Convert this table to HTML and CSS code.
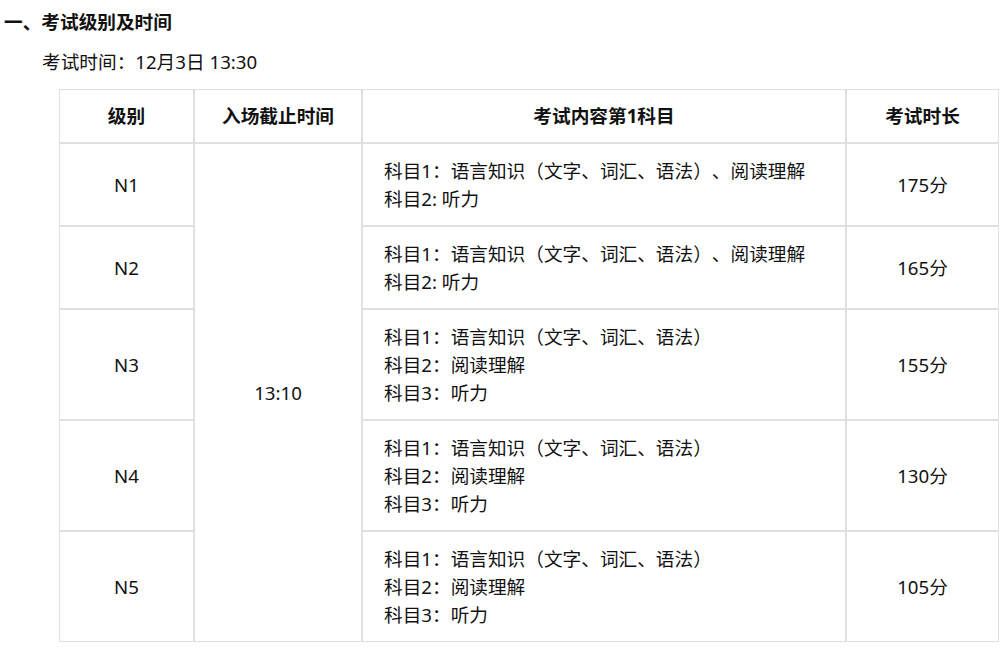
FILE: index.html
```html
<!DOCTYPE html>
<html lang="zh-CN">
<head>
<meta charset="utf-8">
<link rel="stylesheet" href="styles.css">
</head>
<body>
<div class="page">
  <h2 class="title">一、考试级别及时间</h2>
  <p class="time">考试时间：12月3日 13:30</p>
  <table class="exam">
    <colgroup>
      <col class="c1"><col class="c2"><col class="c3"><col class="c4">
    </colgroup>
    <thead>
      <tr><th>级别</th><th>入场截止时间</th><th>考试内容第1科目</th><th>考试时长</th></tr>
    </thead>
    <tbody>
      <tr>
        <td class="center">N1</td>
        <td class="center" rowspan="5">13:10</td>
        <td class="content">科目1：语言知识（文字、词汇、语法）、阅读理解<br>科目2: 听力</td>
        <td class="center">175分</td>
      </tr>
      <tr>
        <td class="center">N2</td>
        <td class="content">科目1：语言知识（文字、词汇、语法）、阅读理解<br>科目2: 听力</td>
        <td class="center">165分</td>
      </tr>
      <tr>
        <td class="center">N3</td>
        <td class="content">科目1：语言知识（文字、词汇、语法）<br>科目2：阅读理解<br>科目3：听力</td>
        <td class="center">155分</td>
      </tr>
      <tr>
        <td class="center">N4</td>
        <td class="content">科目1：语言知识（文字、词汇、语法）<br>科目2：阅读理解<br>科目3：听力</td>
        <td class="center">130分</td>
      </tr>
      <tr>
        <td class="center">N5</td>
        <td class="content">科目1：语言知识（文字、词汇、语法）<br>科目2：阅读理解<br>科目3：听力</td>
        <td class="center">105分</td>
      </tr>
    </tbody>
  </table>
</div>
</body>
</html>
```
FILE: styles.css
```css
html, body {
  margin: 0;
  padding: 0;
  background: #fff;
}
body {
  font-family: "Noto Sans", "Noto Sans CJK SC", sans-serif;
  font-size: 18.67px;
  line-height: 28px;
  color: #111;
  text-spacing-trim: space-all;
}
.page {
  padding: 8px 8px 0 4px;
}
.title {
  margin: 0;
  font-size: 18.67px;
  font-weight: bold;
  line-height: 28px;
}
.time {
  margin: 12px 0 0 0;
  padding-left: 38px;
}
.exam {
  margin: 13px 0 0 55px;
  width: 940px;
  table-layout: fixed;
  border-collapse: separate;
  border-spacing: 0;
}
.c1 { width: 135px; }
.c2 { width: 168px; }
.c3 { width: 484px; }
.c4 { width: 153px; }
.exam th, .exam td {
  border: 1px solid #e0e0e0;
  vertical-align: middle;
  box-sizing: border-box;
}
.exam th {
  padding: 12px 21px;
  font-weight: bold;
  text-align: center;
}
.exam td {
  padding: 13px 21px 12px;
}
.center {
  text-align: center;
}
.content {
  text-align: left;
}
```
